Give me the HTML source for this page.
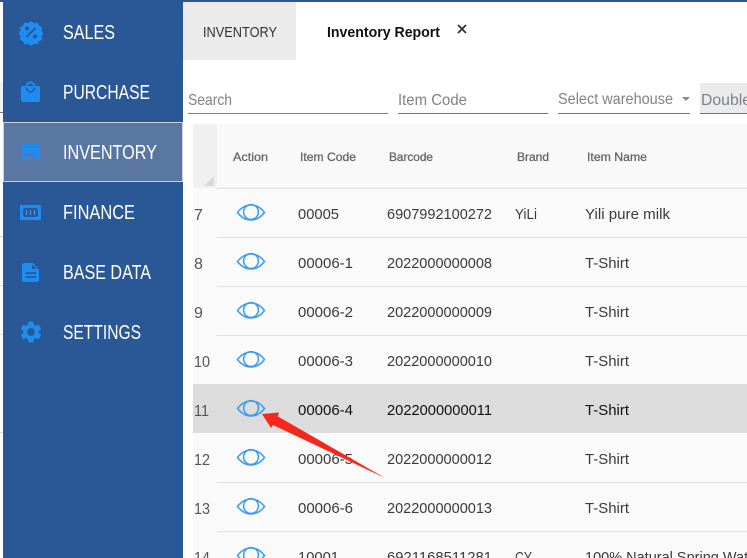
<!DOCTYPE html>
<html lang="en">
<head>
<meta charset="utf-8">
<title>Inventory Report</title>
<style>
html,body{margin:0;padding:0;width:747px;height:558px;overflow:hidden;background:#fff}
svg{display:block}
text{font-family:"Liberation Sans",sans-serif;white-space:pre}
.n{font-size:20px;fill:#fff}
.h{font-size:12px;fill:#666;stroke:#666;stroke-width:.3}
.f{font-size:16px;fill:#7d838b}
.c{font-size:15px;fill:#3a3a3a}
.d{font-size:15px;fill:#111}
.r{font-size:16px;fill:#555}
.e{fill:none;stroke:#3a9bf0;stroke-width:1.5}
</style>
</head>
<body>
<svg xmlns="http://www.w3.org/2000/svg" width="747" height="558" viewBox="0 0 747 558">
<defs>
<g id="eye"><path class="e" d="M237.500 212.500C241 208 245.500 205 251 205S261 208 264.500 212.500C261 217 256.500 220 251 220S241 217 237.500 212.500Z"/><circle class="e" cx="251" cy="212" r="7.400"/></g>
</defs>

<!-- background strip -->
<rect x="0" y="0" width="3" height="558" fill="#fff"/>
<rect x="0" y="82" width="3" height="30" fill="#f2f2f2"/>
<rect x="0" y="112" width="3" height="1" fill="#777"/>
<rect x="0" y="236" width="3" height="1" fill="#ddd"/>
<rect x="0" y="285" width="3" height="1" fill="#ddd"/>
<rect x="0" y="334" width="3" height="1" fill="#ddd"/>
<rect x="0" y="432" width="3" height="1" fill="#ddd"/>

<!-- top bar -->
<rect x="0" y="0" width="747" height="2" fill="#2a5796"/>

<!-- sidebar -->
<rect x="3" y="0" width="180" height="558" fill="#2a5796"/>
<rect x="3.500" y="122.500" width="179" height="59" fill="#5a77a4" stroke="#cfd3d9"/>

<text class="n" x="63" y="39" textLength="52" lengthAdjust="spacingAndGlyphs">SALES</text>
<text class="n" x="63" y="99" textLength="87" lengthAdjust="spacingAndGlyphs">PURCHASE</text>
<text class="n" x="63" y="159" textLength="94" lengthAdjust="spacingAndGlyphs">INVENTORY</text>
<text class="n" x="63" y="219" textLength="72" lengthAdjust="spacingAndGlyphs">FINANCE</text>
<text class="n" x="63" y="279" textLength="88" lengthAdjust="spacingAndGlyphs">BASE DATA</text>
<text class="n" x="63" y="339" textLength="78" lengthAdjust="spacingAndGlyphs">SETTINGS</text>

<!-- sales icon -->
<path fill="#1e8cf0" d="M31 21l3 2.200 3.500-.7 1.500 3.200 3.200 1.500-.7 3.500 2 2.800-2 2.800.7 3.500-3.200 1.500-1.500 3.200-3.500-.7-3 2.200-3-2.200-3.500.7-1.500-3.200-3.200-1.500.7-3.500-2-2.800 2-2.800-.7-3.500 3.200-1.500 1.500-3.200 3.500.7z"/>
<path stroke="#2a5796" stroke-width="2" d="M35.500 28L26.500 37"/>
<circle cx="27" cy="28.500" r="2" fill="#2a5796"/>
<circle cx="35" cy="36.500" r="2" fill="#2a5796"/>

<!-- purchase icon -->
<path fill="#1e8cf0" d="M23 86H38.500a1.500 1.500 0 0 1 1.500 1.500V100a2 2 0 0 1-2 2H23a2 2 0 0 1-2-2V87.500A1.500 1.500 0 0 1 23 86Z"/>
<path fill="none" stroke="#1e8cf0" stroke-width="2" d="M26.500 87V86.500a4 4 0 0 1 8 0V87"/>
<path fill="none" stroke="#2a5796" stroke-width="1.500" d="M26.500 87.500a4 4.500 0 0 0 8 0"/>

<!-- inventory icon -->
<path fill="#1e8cf0" fill-rule="evenodd" d="M22 144H39.500V146.700H22ZM22 148H39.500L40 153H39.500V160H36V153H33.500V160H22V153H21.500ZM24.500 153V157H31V153Z"/>

<!-- finance icon -->
<rect x="20" y="205" width="21" height="15" fill="#1e8cf0"/>
<rect x="23" y="208" width="15" height="9" rx="2.500" fill="#2a5796"/>
<path fill="none" stroke="#4f94e2" stroke-width="1.200" d="M26.500 210v5M30.500 210v5M34.500 210v5"/>

<!-- base data icon -->
<path fill="#1e8cf0" d="M33 263H24c-1.100 0-2 .9-2 2V280c0 1.100.9 2 2 2H37c1.100 0 2-.9 2-2V269.500l-6-6.500zM36 278H25.500v-1.800H36zM36 274H25.500v-1.800H36zM32 269V264.500L37.500 269z"/>

<!-- settings icon -->
<g transform="translate(18,319) scale(1.080)"><path fill="#1e8cf0" d="M19.140 12.940c.04-.3.06-.61.06-.94 0-.32-.02-.64-.07-.94l2.030-1.580c.18-.14.23-.41.12-.61l-1.920-3.320c-.12-.22-.37-.29-.59-.22l-2.390.96c-.5-.38-1.030-.7-1.620-.94l-.36-2.540c-.04-.24-.24-.41-.48-.41h-3.840c-.24 0-.43.17-.47.41l-.36 2.540c-.59.24-1.130.57-1.620.94l-2.390-.96c-.22-.08-.47 0-.59.22L2.740 8.870c-.12.21-.08.47.12.61l2.030 1.580c-.05.3-.09.63-.09.94s.02.64.07.94l-2.030 1.580c-.18.14-.23.41-.12.61l1.920 3.320c.12.22.37.29.59.22l2.390-.96c.5.38 1.030.7 1.620.94l.36 2.540c.05.24.24.41.48.41h3.840c.24 0 .44-.17.47-.41l.36-2.540c.59-.24 1.130-.56 1.620-.94l2.390.96c.22.08.47 0 .59-.22l1.920-3.320c.12-.22.07-.47-.12-.61l-2.010-1.580zM12 15.600c-1.980 0-3.600-1.620-3.600-3.600s1.620-3.600 3.600-3.600 3.600 1.620 3.600 3.600-1.620 3.600-3.600 3.600z"/></g>

<!-- tabs -->
<rect x="183" y="2" width="113" height="58" fill="#ebebeb"/>
<text x="203" y="37" font-size="15" fill="#333" textLength="74" lengthAdjust="spacingAndGlyphs">INVENTORY</text>
<text x="327" y="37" font-size="15" font-weight="bold" fill="#111" textLength="113" lengthAdjust="spacingAndGlyphs">Inventory Report</text>
<path stroke="#333" stroke-width="1.800" fill="none" d="M458 25L466 33M466 25L458 33"/>

<!-- filters -->
<text class="f" x="188" y="105" textLength="44" lengthAdjust="spacingAndGlyphs">Search</text>
<rect x="188" y="113" width="200" height="1" fill="#3a8fe0"/>
<text class="f" x="398" y="105" textLength="69" lengthAdjust="spacingAndGlyphs">Item Code</text>
<rect x="398" y="113" width="150" height="1" fill="#757575"/>
<text class="f" x="558" y="104" textLength="115" lengthAdjust="spacingAndGlyphs">Select warehouse</text>
<path fill="#8a8a8a" d="M682 97H690L686 101Z"/>
<rect x="558" y="113" width="132" height="1" fill="#757575"/>
<rect x="700" y="83" width="47" height="30" fill="#ebebeb"/>
<text class="f" x="701" y="105" textLength="50" lengthAdjust="spacingAndGlyphs">Double</text>
<rect x="700" y="113" width="47" height="1" fill="#757575"/>

<!-- table -->
<rect x="193" y="124" width="554" height="434" fill="#fafafa"/>
<rect x="193" y="124" width="24" height="64" fill="#f0f0f0"/>
<rect x="217" y="124" width="530" height="64" fill="#f9f9f9"/>
<path fill="#d9d9d9" d="M214 176V186H204Z"/>
<rect x="217" y="188" width="530" height="1" fill="#dedede"/>
<rect x="217" y="237" width="530" height="1" fill="#e2e2e2"/>
<rect x="217" y="286" width="530" height="1" fill="#e2e2e2"/>
<rect x="217" y="335" width="530" height="1" fill="#e2e2e2"/>
<rect x="193" y="384" width="554" height="49" fill="#dcdcdc"/>
<rect x="217" y="482" width="530" height="1" fill="#e2e2e2"/>
<rect x="217" y="531" width="530" height="1" fill="#e2e2e2"/>

<text class="h" x="233" y="161" textLength="35" lengthAdjust="spacingAndGlyphs">Action</text>
<text class="h" x="300" y="161" textLength="56" lengthAdjust="spacingAndGlyphs">Item Code</text>
<text class="h" x="389" y="161" textLength="44" lengthAdjust="spacingAndGlyphs">Barcode</text>
<text class="h" x="517" y="161" textLength="32" lengthAdjust="spacingAndGlyphs">Brand</text>
<text class="h" x="587" y="161" textLength="60" lengthAdjust="spacingAndGlyphs">Item Name</text>

<!-- row 7 -->
<text class="r" x="194" y="220">7</text>
<use href="#eye"/>
<text class="c" x="298" y="219" textLength="41" lengthAdjust="spacingAndGlyphs">00005</text>
<text class="c" x="387" y="219" textLength="105" lengthAdjust="spacingAndGlyphs">6907992100272</text>
<text class="c" x="515" y="219" textLength="22" lengthAdjust="spacingAndGlyphs">YiLi</text>
<text class="c" x="585" y="219" textLength="85" lengthAdjust="spacingAndGlyphs">Yili pure milk</text>

<!-- row 8 -->
<text class="r" x="194" y="269">8</text>
<use href="#eye" y="49"/>
<text class="c" x="298" y="268" textLength="55" lengthAdjust="spacingAndGlyphs">00006-1</text>
<text class="c" x="387" y="268" textLength="105" lengthAdjust="spacingAndGlyphs">2022000000008</text>
<text class="c" x="585" y="268" textLength="44" lengthAdjust="spacingAndGlyphs">T-Shirt</text>

<!-- row 9 -->
<text class="r" x="194" y="318">9</text>
<use href="#eye" y="98"/>
<text class="c" x="298" y="317" textLength="55" lengthAdjust="spacingAndGlyphs">00006-2</text>
<text class="c" x="387" y="317" textLength="105" lengthAdjust="spacingAndGlyphs">2022000000009</text>
<text class="c" x="585" y="317" textLength="44" lengthAdjust="spacingAndGlyphs">T-Shirt</text>

<!-- row 10 -->
<text class="r" x="194" y="367" textLength="16" lengthAdjust="spacingAndGlyphs">10</text>
<use href="#eye" y="147"/>
<text class="c" x="298" y="366" textLength="55" lengthAdjust="spacingAndGlyphs">00006-3</text>
<text class="c" x="387" y="366" textLength="105" lengthAdjust="spacingAndGlyphs">2022000000010</text>
<text class="c" x="585" y="366" textLength="44" lengthAdjust="spacingAndGlyphs">T-Shirt</text>

<!-- row 11 -->
<text class="r" x="194" y="416" textLength="15" lengthAdjust="spacingAndGlyphs">11</text>
<use href="#eye" y="196"/>
<text class="d" x="298" y="415" textLength="55" lengthAdjust="spacingAndGlyphs">00006-4</text>
<text class="d" x="387" y="415" textLength="105" lengthAdjust="spacingAndGlyphs">2022000000011</text>
<text class="d" x="585" y="415" textLength="44" lengthAdjust="spacingAndGlyphs">T-Shirt</text>

<!-- row 12 -->
<text class="r" x="194" y="465" textLength="16" lengthAdjust="spacingAndGlyphs">12</text>
<use href="#eye" y="245"/>
<text class="c" x="298" y="464" textLength="55" lengthAdjust="spacingAndGlyphs">00006-5</text>
<text class="c" x="387" y="464" textLength="105" lengthAdjust="spacingAndGlyphs">2022000000012</text>
<text class="c" x="585" y="464" textLength="44" lengthAdjust="spacingAndGlyphs">T-Shirt</text>

<!-- row 13 -->
<text class="r" x="194" y="514" textLength="16" lengthAdjust="spacingAndGlyphs">13</text>
<use href="#eye" y="294"/>
<text class="c" x="298" y="513" textLength="55" lengthAdjust="spacingAndGlyphs">00006-6</text>
<text class="c" x="387" y="513" textLength="105" lengthAdjust="spacingAndGlyphs">2022000000013</text>
<text class="c" x="585" y="513" textLength="44" lengthAdjust="spacingAndGlyphs">T-Shirt</text>

<!-- row 14 -->
<text class="r" x="194" y="563" textLength="16" lengthAdjust="spacingAndGlyphs">14</text>
<use href="#eye" y="343"/>
<text class="c" x="298" y="562" textLength="41" lengthAdjust="spacingAndGlyphs">10001</text>
<text class="c" x="387" y="562" textLength="105" lengthAdjust="spacingAndGlyphs">6921168511281</text>
<text class="c" x="515" y="562" textLength="17" lengthAdjust="spacingAndGlyphs">CY</text>
<text class="c" x="585" y="562" textLength="176" lengthAdjust="spacingAndGlyphs">100% Natural Spring Water</text>

<!-- red arrow -->
<path fill="#f5281e" d="M262 414L279 412.500L278 416.500L385 478L273 425L271 428Z"/>
</svg>
</body>
</html>
